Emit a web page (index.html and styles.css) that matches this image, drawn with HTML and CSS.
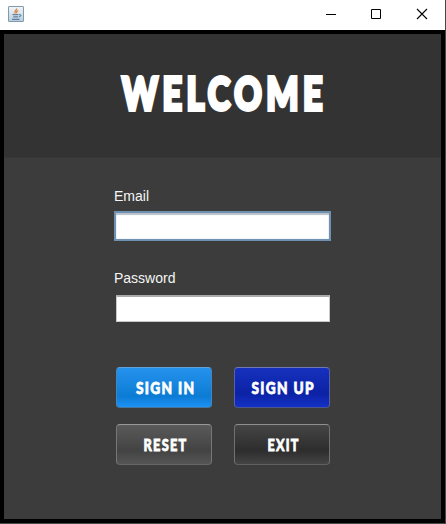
FILE: index.html
```html
<!DOCTYPE html>
<html lang="en">
<head>
<meta charset="utf-8">
<title>Welcome</title>
<link rel="stylesheet" href="styles.css">
</head>
<body>
<div class="window">
  <header class="titlebar">
    <svg class="app-icon" width="16" height="16" viewBox="0 0 16 16" fill="none">
      <defs><linearGradient id="tile" x1="0" y1="0" x2="0" y2="1"><stop offset="0" stop-color="#f2f6f9"/><stop offset="1" stop-color="#b9cddc"/></linearGradient></defs>
      <rect x=".5" y=".5" width="15" height="15" rx=".5" fill="url(#tile)" stroke="#7f99ae"/>
      <path d="M8.500 2.500c1 1.800-3 2-1.300 5M10.300 4.500C8.300 5.300 8.200 6 8.800 7.300" stroke="#df8439" stroke-width="1.300"/>
      <path d="M4.500 8.700h6M5.200 10.900h5M4 13.300h7.500M11 8.700c2.800-.5 2.300 1.800 0 2.200" stroke="#456b91"/>
    </svg>
    <div class="controls">
      <svg width="10" height="10" viewBox="0 0 10 10"><path d="M0 5.500h10" stroke="#000"/></svg>
      <svg width="10" height="10" viewBox="0 0 10 10"><path d="M.5.500h9v9h-9z" fill="none" stroke="#000"/></svg>
      <svg width="10" height="10" viewBox="0 0 10 10"><path d="M0 0l10 10M10 0L0 10" stroke="#000" stroke-width="1.100"/></svg>
    </div>
  </header>
  <main class="panel">
    <div class="banner">
      <svg width="220" height="60" role="heading" aria-level="1"><text class="title" x="3" y="40.500" textLength="205" lengthAdjust="spacingAndGlyphs">WELCOME</text></svg>
    </div>
    <form class="form">
      <label class="label" for="email">Email</label>
      <input class="field focused" id="email" type="text">
      <label class="label second" for="password">Password</label>
      <input class="field" id="password" type="password">
      <div class="buttons">
        <button class="button sign-in" type="button"><svg width="94" height="39"><text class="caption" x="19" y="26" textLength="59.500" lengthAdjust="spacingAndGlyphs">SIGN IN</text></svg></button>
        <button class="button sign-up" type="button"><svg width="94" height="39"><text class="caption" x="16.500" y="26" textLength="63.500" lengthAdjust="spacingAndGlyphs">SIGN UP</text></svg></button>
        <button class="button reset" type="button"><svg width="94" height="39"><text class="caption" x="26.500" y="26" textLength="44" lengthAdjust="spacingAndGlyphs">RESET</text></svg></button>
        <button class="button exit" type="button"><svg width="94" height="39"><text class="caption" x="32.500" y="26" textLength="32" lengthAdjust="spacingAndGlyphs">EXIT</text></svg></button>
      </div>
    </form>
  </main>
</div>
</body>
</html>
```
FILE: styles.css
```css
* { box-sizing: border-box; }
body { margin: 0; overflow: hidden; }
svg { display: block; overflow: visible; }
.window {
  width: 446px;
  height: 524px;
  display: flex;
  flex-direction: column;
  border-right: 1px solid #48484a;
  border-bottom: 1px solid #48484a;
  background: #000;
}
.titlebar {
  height: 30px;
  flex: none;
  display: flex;
  justify-content: space-between;
  padding: 6px 18px 0 8px;
  background: #fff;
}
.controls { display: flex; gap: 35px; padding-top: 3px; }
.controls svg:not(:last-child) { position: relative; left: -1px; }
.panel {
  flex: 1;
  margin: 4px;
  background: #3c3c3c;
}
.banner {
  height: 124px;
  padding: 35px 0 0 115px;
  background: #333;
  border-bottom: 1px solid #373737;
}
.title, .caption {
  font-family: Lato, "Open Sans", sans-serif;
  font-weight: 900;
  fill: #fff;
}
.title { font-size: 45px; letter-spacing: 6px; stroke: #fff; stroke-width: 3.8px; }
.caption { font-size: 17.500px; letter-spacing: 1.7px; stroke: #fff; stroke-width: .8px; }
.form {
  display: flex;
  flex-direction: column;
  width: 217px;
  margin-left: 110px;
  padding-top: 30px;
}
.label {
  height: 16px;
  font: 14px/16px "Liberation Sans", sans-serif;
  color: #f5f5f5;
}
.second { margin-top: 29px; }
.field {
  width: 214px;
  height: 27px;
  margin: 9px 0 0 2px;
  padding: 0 4px;
  border: 1px solid #c8c8c8;
  border-top: 2px solid #aaa;
  border-radius: 0;
  background: #fff;
  outline: none;
}
.focused {
  width: 217px;
  height: 30px;
  margin: 7px 0 0;
  border: 2px solid #6f91b1;
  box-shadow: inset 0 2px 1px #b8c0ca, inset 0 0 1px #a2b6ca;
}
.buttons {
  display: grid;
  grid-template-columns: 96px 96px;
  gap: 16px 22px;
  margin: 45px 0 0 2px;
}
.button {
  height: 41px;
  padding: 0;
  border: 1px solid #777;
  border-radius: 4px;
}
.sign-in {
  background: linear-gradient(#2592ee 0%, #1685de 45%, #0b7bd4 72%, #1d92f5 100%);
  border-color: #62a3dc #4685b8 #46759b;
}
.sign-up {
  background: linear-gradient(#1631be 0%, #0c22a5 65%, #1431c6 100%);
  border-color: #7079b0 #5961a0 #4c568e;
}
.reset {
  background: linear-gradient(#5a5a5a 0%, #434343 65%, #555 100%);
  border-color: #999 #777 #666;
}
.exit {
  background: linear-gradient(#454545 0%, #2d2d2d 65%, #444 100%);
  border-color: #909090 #707070 #606060;
}
```
